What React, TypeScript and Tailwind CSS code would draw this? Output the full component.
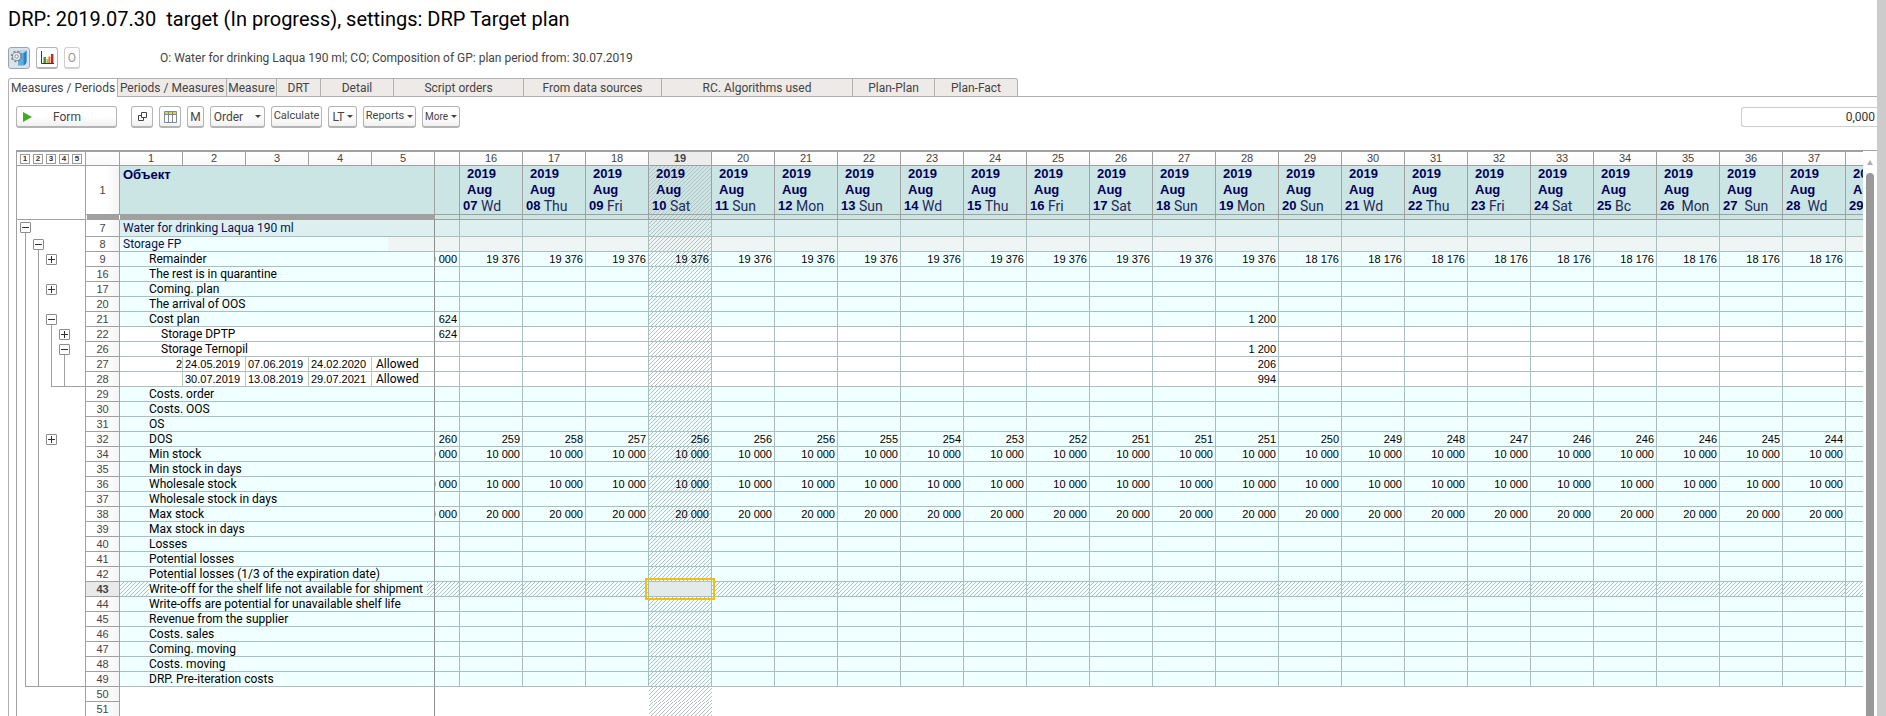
import type { ReactNode } from "react";

type Track = "" | "plus" | "minus" | "line" | "end" | "join" | "under";

interface PlanRow {
  n: number;
  label: string;
  tree?: Track[];
  kind?: "product" | "group" | "detail" | "lot" | "empty";
  first?: string;
  values?: string[];
  lot?: string[];
}

const DAYS: [string, string][] = [
  ["07", " Wd"],
  ["08", " Thu"],
  ["09", " Fri"],
  ["10", " Sat"],
  ["11", " Sun"],
  ["12", " Mon"],
  ["13", " Sun"],
  ["14", " Wd"],
  ["15", " Thu"],
  ["16", " Fri"],
  ["17", " Sat"],
  ["18", " Sun"],
  ["19", " Mon"],
  ["20", " Sun"],
  ["21", " Wd"],
  ["22", " Thu"],
  ["23", " Fri"],
  ["24", " Sat"],
  ["25", " Bc"],
  ["26", "  Mon"],
  ["27", "  Sun"],
  ["28", "  Wd"],
  ["29", ""],
];

const FIRST_DAY_COLUMN = 16;
const CURRENT_COLUMN = 19;
const CURRENT_ROW = 43;
const DAY_COUNT = 22;

const same = (value: string) => Array.from({ length: DAY_COUNT }, () => value);
const only28 = (value: string) =>
  Array.from({ length: DAY_COUNT }, (_, i) => (i + FIRST_DAY_COLUMN === 28 ? value : ""));

const ROWS: PlanRow[] = [
  { n: 7, label: "Water for drinking Laqua 190 ml", kind: "product", tree: ["minus"] },
  { n: 8, label: "Storage FP", kind: "group", tree: ["line", "minus"] },
  {
    n: 9,
    label: "Remainder",
    tree: ["line", "line", "plus"],
    first: "0 000",
    values: same("19 376").map((v, i) => (i > 12 ? "18 176" : v)),
  },
  { n: 16, label: "The rest is in quarantine" },
  { n: 17, label: "Coming. plan", tree: ["line", "line", "plus"] },
  { n: 20, label: "The arrival of OOS" },
  { n: 21, label: "Cost plan", tree: ["line", "line", "minus"], first: "624", values: only28("1 200") },
  { n: 22, label: "Storage DPTP", kind: "detail", tree: ["line", "line", "line", "plus"], first: "624" },
  { n: 26, label: "Storage Ternopil", kind: "detail", tree: ["line", "line", "line", "minus"], values: only28("1 200") },
  {
    n: 27,
    label: "2",
    kind: "lot",
    tree: ["line", "line", "line", "line"],
    lot: ["24.05.2019", "07.06.2019", "24.02.2020"],
    values: only28("206"),
  },
  {
    n: 28,
    label: "",
    kind: "lot",
    tree: ["line", "line", "end", "join", "under"],
    lot: ["30.07.2019", "13.08.2019", "29.07.2021"],
    values: only28("994"),
  },
  { n: 29, label: "Costs. order" },
  { n: 30, label: "Costs. OOS" },
  { n: 31, label: "OS" },
  {
    n: 32,
    label: "DOS",
    tree: ["line", "line", "plus"],
    first: "260",
    values: [
      "259", "258", "257", "256", "256", "256", "255", "254", "253", "252", "251",
      "251", "251", "250", "249", "248", "247", "246", "246", "246", "245", "244",
    ],
  },
  { n: 34, label: "Min stock", first: "0 000", values: same("10 000") },
  { n: 35, label: "Min stock in days" },
  { n: 36, label: "Wholesale stock", first: "0 000", values: same("10 000") },
  { n: 37, label: "Wholesale stock in days" },
  { n: 38, label: "Max stock", first: "0 000", values: same("20 000") },
  { n: 39, label: "Max stock in days" },
  { n: 40, label: "Losses" },
  { n: 41, label: "Potential losses" },
  { n: 42, label: "Potential losses (1/3 of the expiration date)" },
  { n: 43, label: "Write-off for the shelf life not available for shipment" },
  { n: 44, label: "Write-offs are potential for unavailable shelf life" },
  { n: 45, label: "Revenue from the supplier" },
  { n: 46, label: "Costs. sales" },
  { n: 47, label: "Coming. moving" },
  { n: 48, label: "Costs. moving" },
  { n: 49, label: "DRP. Pre-iteration costs", tree: ["end", "join", "under", "under", "under"] },
  { n: 50, label: "", kind: "empty", tree: [] },
  { n: 51, label: "", kind: "empty", tree: [] },
];

const TABS: [string, string][] = [
  ["Measures / Periods", "w-[110px]"],
  ["Periods / Measures", "w-[109px]"],
  ["Measure", "w-[50px]"],
  ["DRT", "w-[44px]"],
  ["Detail", "w-[73px]"],
  ["Script orders", "w-[130px]"],
  ["From data sources", "w-[138px]"],
  ["RC. Algorithms used", "w-[191px]"],
  ["Plan-Plan", "w-[82px]"],
  ["Plan-Fact", "w-[83px]"],
];

const HATCH =
  "bg-[linear-gradient(135deg,transparent_40%,#b6c0c0_40%,#b6c0c0_60%,transparent_60%)] bg-[size:4px_4px]";

const BTN =
  "flex h-[22px] shrink-0 items-center justify-center rounded-[3px] border border-b-2 border-[#b4b4b4] bg-white bg-linear-to-b from-white from-50% to-[#f0f0f0] text-[#444] whitespace-nowrap";

function Caret() {
  return (
    <svg className="h-[3px] w-[6px] shrink-0" viewBox="0 0 6 3" aria-hidden="true">
      <path d="M0 0h6L3 3z" fill="#444" />
    </svg>
  );
}

function ToggleBox({ open }: { open: boolean }) {
  return (
    <button
      type="button"
      aria-label={open ? "Collapse group" : "Expand group"}
      className="block size-[11px] shrink-0 rounded-[1px] border border-[#8c8c8c] bg-white"
    >
      <svg className="block size-[9px]" viewBox="0 0 9 9" shapeRendering="crispEdges" aria-hidden="true">
        <path d="M1 4h7v1H1z" fill="#333" />
        {!open && <path d="M4 1h1v7H4z" fill="#333" />}
      </svg>
    </button>
  );
}

function TreeTrack({ kind }: { kind: Track }) {
  if (kind === "plus" || kind === "minus") {
    return (
      <span className="flex w-[13px] flex-col items-center">
        <span className="h-[2px]" />
        <ToggleBox open={kind === "minus"} />
        {kind === "minus" && <span className="w-px flex-1 bg-[#a0a0a0]" />}
      </span>
    );
  }
  if (kind === "line" || kind === "end" || kind === "join") {
    return (
      <span className="flex w-[13px]">
        <span className={kind === "join" ? "w-[6px] border-b border-[#a0a0a0]" : "w-[6px]"} />
        <span
          className={
            kind === "line"
              ? "flex-1 border-l border-[#a0a0a0]"
              : "flex-1 border-b border-l border-[#a0a0a0]"
          }
        />
      </span>
    );
  }
  return <span className={kind === "under" ? "w-[13px] border-b border-[#a0a0a0]" : "w-[13px]"} />;
}

function TreeCell({ tracks, tall }: { tracks: Track[]; tall: boolean }) {
  const padded = Array.from({ length: 5 }, (_, i) => tracks[i] ?? "");
  return (
    <td className="border-x border-[#a0a0a0] p-0">
      <div className={tall ? "flex h-[17px] pl-[2px]" : "flex h-[15px] pl-[2px]"}>
        {padded.map((t, i) => (
          <TreeTrack key={i} kind={t} />
        ))}
        <span className={padded[4] === "under" ? "flex-1 border-b border-[#a0a0a0]" : "flex-1"} />
      </div>
    </td>
  );
}

function fillFor(kind: PlanRow["kind"]) {
  if (kind === "product") return "bg-[#deeff0]";
  if (kind === "group") return "bg-[#eff4f4]";
  if (kind === "detail" || kind === "lot" || kind === "empty") return "bg-white";
  return "bg-[#f0ffff]";
}

function LabelCells({ row, fill, hatch }: { row: PlanRow; fill: string; hatch: string }) {
  if (row.kind === "lot") {
    const cell = "border-r border-b border-r-[#b4ccb8] border-b-[#a9bebe] bg-white p-0";
    return (
      <>
        <td className={`${cell} text-right`}>{row.label}</td>
        {row.lot?.map((d) => (
          <td key={d} className={`${cell} pl-[2px]`}>
            {d}
          </td>
        ))}
        <td className="border-r border-b border-r-[#909090] border-b-[#a9bebe] bg-white p-0 pl-1 font-[Roboto,sans-serif] text-xs leading-[14px]">
          Allowed
        </td>
      </>
    );
  }
  if (row.kind === "empty") {
    return <td colSpan={5} className="border-r border-[#909090] bg-white p-0" />;
  }
  const look =
    row.kind === "product"
      ? "pl-[3px] text-[#06124f] bg-[#deeff0]"
      : row.kind === "group"
        ? "pl-[3px] text-[#06124f] bg-[linear-gradient(to_right,#f0ffff_268px,#eff4f4_268px)]"
        : row.kind === "detail"
          ? "pl-[41px] bg-white"
          : `pl-[29px] ${fill}`;
  return (
    <td
      colSpan={5}
      className={`border-r border-b border-r-[#909090] border-b-[#a9bebe] p-0 font-[Roboto,sans-serif] text-xs leading-[14px] whitespace-nowrap ${look} ${hatch}`}
    >
      {hatch ? <span className="bg-[#f0ffff] pr-1">{row.label}</span> : row.label}
    </td>
  );
}

function Row({ row }: { row: PlanRow }) {
  const current = row.n === CURRENT_ROW;
  const fill = fillFor(row.kind);
  const line = row.kind === "empty" ? "" : "border-r border-b border-[#a9bebe]";
  const rowHatch = current ? HATCH : "";
  return (
    <tr className={row.kind === "product" ? "h-[17px]" : "h-[15px]"}>
      <TreeCell tracks={row.tree ?? ["line", "line"]} tall={row.kind === "product"} />
      <th
        scope="row"
        className={`border-r border-b border-[#a0a0a0] p-0 text-center text-[#444] ${
          current ? "bg-[#e9e9e9] font-bold" : "bg-linear-to-r from-white from-60% to-[#f4f4f4] font-normal"
        }`}
      >
        {row.n}
      </th>
      <LabelCells row={row} fill={fill} hatch={rowHatch} />
      <td className={`p-0 ${fill} ${line} ${rowHatch}`}>
        {row.first && (
          <div className="flex justify-end overflow-hidden pr-[2px] whitespace-nowrap">{row.first}</div>
        )}
      </td>
      {DAYS.map(([day], i) => {
        const isCurrentColumn = i + FIRST_DAY_COLUMN === CURRENT_COLUMN;
        if (isCurrentColumn && current) {
          return (
            <td key={day} className="relative border-r border-b border-[#a9bebe] bg-[#e3eaea] p-0">
              <span className="absolute -inset-[4px] border-2 border-[#f5bd0c]" />
            </td>
          );
        }
        return (
          <td
            key={day}
            className={`p-0 pr-[2px] text-right ${fill} ${line} ${isCurrentColumn ? HATCH : rowHatch}`}
          >
            {row.values?.[i] ?? ""}
          </td>
        );
      })}
    </tr>
  );
}

function HeadNumber({ children, current }: { children?: ReactNode; current?: boolean }) {
  return (
    <th
      className={`border-r border-b border-[#a0a0a0] p-0 text-center text-[#444] ${
        current ? "bg-[#ececec] font-bold" : "bg-linear-to-b from-white to-[#f9f9f9] font-normal"
      }`}
    >
      {children}
    </th>
  );
}

function PlanTable() {
  return (
    <table className="w-[1893px] table-fixed border-separate border-spacing-0 border-t-2 border-[#a0a0a0] font-['Liberation_Sans',Arial,sans-serif] text-[11px] leading-[13px] text-black">
      <colgroup>
        <col className="w-[70px]" />
        <col className="w-[34px]" />
        {[1, 2, 3, 4, 5].map((c) => (
          <col key={c} className="w-[63px]" />
        ))}
        <col className="w-[25px]" />
        {DAYS.map((d) => (
          <col key={d[0]} className="w-[63px]" />
        ))}
      </colgroup>
      <thead>
        <tr className="h-[14px]">
          <th className="border-x border-b border-[#a0a0a0] p-0">
            <div className="flex gap-[3px] pl-[3px]">
              {[1, 2, 3, 4, 5].map((l) => (
                <button
                  key={l}
                  type="button"
                  className="flex size-[10px] items-center justify-center border border-[#9a9a9a] bg-white text-[8px] leading-none font-bold text-[#333]"
                >
                  {l}
                </button>
              ))}
            </div>
          </th>
          <HeadNumber />
          {[1, 2, 3, 4, 5].map((c) => (
            <HeadNumber key={c}>{c}</HeadNumber>
          ))}
          <HeadNumber />
          {DAYS.map(([day], i) => (
            <HeadNumber key={day} current={i + FIRST_DAY_COLUMN === CURRENT_COLUMN}>
              {i < DAY_COUNT ? i + FIRST_DAY_COLUMN : ""}
            </HeadNumber>
          ))}
        </tr>
        <tr className="h-[49px]">
          <td rowSpan={2} className="border-x border-b border-[#a0a0a0] p-0" />
          <th scope="row" className="border-r border-b border-[#a0a0a0] bg-linear-to-r from-white from-60% to-[#f4f4f4] p-0 text-center font-normal text-[#444]">
            1
          </th>
          <th
            colSpan={5}
            className="border-r border-b border-[#a0a0a0] bg-[#cbe4e4] p-0 pt-px pl-[3px] text-left align-top text-[13px] leading-4 text-[#00005a]"
          >
            Объект
          </th>
          <td className="border-r border-b border-[#a0a0a0] bg-[#cbe4e4] p-0" />
          {DAYS.map(([day, weekday], i) => (
            <th
              key={day}
              className={`border-r border-b border-[#a0a0a0] bg-[#cbe4e4] p-0 text-left align-top text-[13px] leading-4 text-[#00005a] ${
                i + FIRST_DAY_COLUMN === CURRENT_COLUMN ? HATCH : ""
              }`}
            >
              <div className="pl-[7px]">2019</div>
              <div className="pl-[7px]">Aug</div>
              <div className="flex h-4 pl-[3px] whitespace-pre">
                <span>{day}</span>
                <span className="font-[Roboto,sans-serif] text-sm leading-4 font-normal text-[#1f2a5e]">{weekday}</span>
              </div>
            </th>
          ))}
        </tr>
        <tr className="h-[5px]">
          <td className="border-x border-b border-x-white border-b-[#a0a0a0] bg-[#a0a0a0] p-0" />
          <td colSpan={5} className="bg-[#a0a0a0] p-0" />
          <td className="border-r border-b border-[#a0a0a0] bg-[#cbe4e4] p-0" />
          {DAYS.map(([day], i) => (
            <td
              key={day}
              className={`border-r border-b border-[#a0a0a0] bg-[#cbe4e4] p-0 ${
                i + FIRST_DAY_COLUMN === CURRENT_COLUMN ? HATCH : ""
              }`}
            />
          ))}
        </tr>
      </thead>
      <tbody>
        {ROWS.map((row) => (
          <Row key={row.n} row={row} />
        ))}
      </tbody>
    </table>
  );
}

function DatabaseIcon() {
  return (
    <svg className="size-[18px]" viewBox="0 0 18 18" aria-hidden="true">
      <path d="M8 4.2C8 2.6 9 1.5 11 1.5h5.5v10.8c0 2-1.4 4.2-3.6 4.2H8z" fill="#5aaee8" />
      <path d="M13.6 4 16.5 1.5v10.8c0 2-1 3.4-2.9 4.2z" fill="#2b7fc6" />
      <path d="M8.4 3.6 11 1.5h5.5L13.6 4z" fill="#b4dcf6" />
      <circle cx="6.6" cy="7.4" r="5" fill="none" stroke="#7d8791" strokeWidth="1.6" strokeDasharray="2 1.93" />
      <circle cx="6.6" cy="7.4" r="4.1" fill="#e9edf1" stroke="#7d8791" strokeWidth="1" />
      <circle cx="6.6" cy="7.4" r="1.7" fill="#fff" stroke="#7d8791" strokeWidth="1" />
    </svg>
  );
}

function ChartIcon() {
  return (
    <svg className="size-[15px]" viewBox="0 0 15 15" aria-hidden="true">
      <path d="M1.5 1v12.5H14" fill="none" stroke="#3a3a3a" strokeWidth="1" />
      <path d="M3.5 7h2.4v6H3.5z" fill="#2f9a3c" />
      <path d="M6.4 9h2v4h-2z" fill="#e0b020" />
      <path d="M8.4 6.5h2V13h-2z" fill="#e87a24" />
      <path d="M11 4h2.4v9H11z" fill="#c4232b" />
    </svg>
  );
}

function CopyIcon() {
  return (
    <svg className="size-[11px]" viewBox="0 0 11 11" fill="none" stroke="#444" strokeWidth="1" aria-hidden="true">
      <path d="M4.5 1.5h5v5h-5z" />
      <path d="M4 4.5H1.5v5h5V7" />
    </svg>
  );
}

function GridIcon() {
  return (
    <svg className="h-[12px] w-[13px]" viewBox="0 0 13 12" aria-hidden="true">
      <path d="M.5.5h12v11H.5z" fill="#fff" stroke="#7c8a96" />
      <path d="M1 1h11v2H1z" fill="#f2d024" />
      <path d="M1 3.5h11M4.5 1v10.5M8.5 1v10.5" stroke="#7c8a96" fill="none" />
    </svg>
  );
}

export default function App() {
  return (
    <div className="flex h-screen overflow-hidden bg-white font-[Roboto,sans-serif] text-[#444]">
      <main className="flex min-w-0 flex-1 flex-col">
        <h1 className="mt-[7px] ml-2 text-xl leading-6 font-normal whitespace-pre text-black">
          DRP: 2019.07.30  target (In progress), settings: DRP Target plan
        </h1>
        <div className="mt-4 ml-2 flex h-[22px] items-center">
          <button type="button" aria-label="Data settings" className="flex size-[22px] items-center justify-center rounded-[3px] border border-[#9aa4ae] bg-[#dbe3ea]">
            <DatabaseIcon />
          </button>
          <button type="button" aria-label="Chart" className="ml-[6px] flex size-[22px] items-center justify-center rounded-[3px] border border-b-2 border-[#b4b4b4] bg-white">
            <ChartIcon />
          </button>
          <button type="button" className="ml-[6px] flex h-[22px] w-4 items-center justify-center rounded-[3px] border border-b-2 border-[#d0d0d0] bg-white text-xs text-[#999]">
            O
          </button>
          <p className="ml-20 text-xs leading-4 text-[#444]">
            O: Water for drinking Laqua 190 ml; CO; Composition of GP: plan period from: 30.07.2019
          </p>
        </div>
        <nav className="mt-[9px] ml-2 flex h-[19px]" role="tablist">
          {TABS.map(([name, width], i) => (
            <button
              key={name}
              type="button"
              role="tab"
              aria-selected={i === 0}
              className={`${width} shrink-0 border-t border-[#b0b0b0] text-xs leading-4 whitespace-nowrap ${
                i === 0
                  ? "rounded-tl-[3px] border-x bg-white"
                  : i === TABS.length - 1
                    ? "rounded-tr-[3px] border-r border-b bg-[#edeae8]"
                    : "border-r border-b bg-[#edeae8]"
              }`}
            >
              {name}
            </button>
          ))}
          <span className="flex-1 border-b border-[#b0b0b0]" />
        </nav>
        <section className="ml-2 flex min-h-0 flex-1 flex-col border-l border-[#b0b0b0] pl-[7px]">
          <div className="mt-[9px] flex h-[22px] items-center">
            <button type="button" className={`${BTN} w-[101px] justify-start pl-[6px]`}>
              <svg className="h-[10px] w-[9px]" viewBox="0 0 9 10" aria-hidden="true">
                <path d="M0 0l9 5-9 5z" fill="#3fae1e" />
              </svg>
              <span className="ml-[21px] text-xs">Form</span>
            </button>
            <button type="button" aria-label="Copy" className={`${BTN} ml-[14px] w-[22px]`}>
              <CopyIcon />
            </button>
            <button type="button" aria-label="Columns" className={`${BTN} ml-[6px] w-[22px]`}>
              <GridIcon />
            </button>
            <button type="button" className={`${BTN} ml-[6px] w-[17px] text-xs`}>M</button>
            <button type="button" className={`${BTN} ml-[6px] w-[55px] gap-3 text-xs`}>
              Order
              <Caret />
            </button>
            <button type="button" className={`${BTN} ml-[6px] w-[51px] text-[11px]`}>Calculate</button>
            <button type="button" className={`${BTN} ml-[6px] w-[29px] gap-[2px] text-xs`}>
              LT
              <Caret />
            </button>
            <button type="button" className={`${BTN} ml-[6px] w-[53px] gap-[3px] text-[11px]`}>
              Reports
              <Caret />
            </button>
            <button type="button" className={`${BTN} ml-[6px] w-[38px] gap-[3px] text-[10px]`}>
              More
              <Caret />
            </button>
            <input
              aria-label="Value"
              defaultValue="0,000"
              className="ml-auto h-5 w-[136px] rounded-l-[3px] border border-r-0 border-[#ccc] bg-white pr-[2px] text-right text-xs text-[#333]"
            />
          </div>
          <div className="mt-[22px] flex min-h-0 flex-1">
            <div className="min-w-0 flex-1 overflow-hidden">
              <PlanTable />
            </div>
            <div className="flex w-[14px] flex-col items-center border-t border-[#a0a0a0] pt-[9px]">
              <svg className="h-[5px] w-[6px]" viewBox="0 0 6 5" aria-hidden="true">
                <path d="M3 0l3 5H0z" fill="#b0b0b0" />
              </svg>
              <span className="mt-2 w-2 flex-1 rounded-t-full bg-[#999]" />
            </div>
          </div>
        </section>
      </main>
      <div className="w-[9px] shrink-0 bg-[#ccc]" />
    </div>
  );
}
